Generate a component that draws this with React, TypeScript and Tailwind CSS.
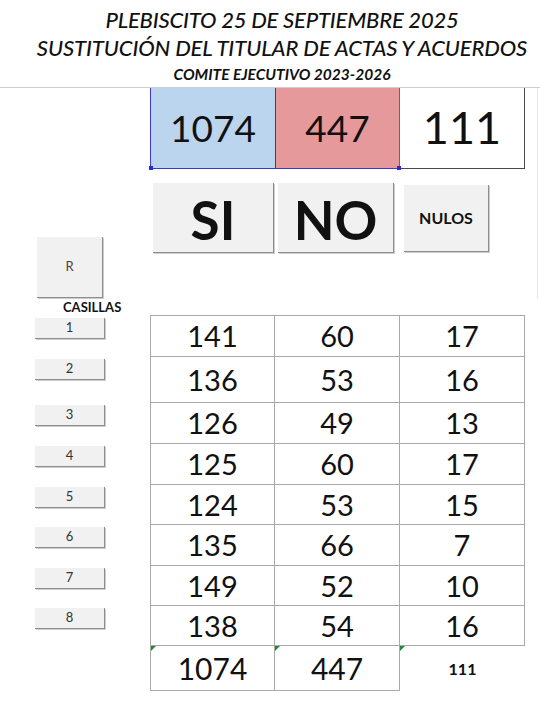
const rows = [
  { n: 1, si: 141, no: 60, nulos: 17, h: 'h-[41px]' },
  { n: 2, si: 136, no: 53, nulos: 16, h: 'h-[46px]' },
  { n: 3, si: 126, no: 49, nulos: 13, h: 'h-[41px]' },
  { n: 4, si: 125, no: 60, nulos: 17, h: 'h-[41px]' },
  { n: 5, si: 124, no: 53, nulos: 15, h: 'h-[40px]' },
  { n: 6, si: 135, no: 66, nulos: 7, h: 'h-[41px]' },
  { n: 7, si: 149, no: 52, nulos: 10, h: 'h-[40px]' },
  { n: 8, si: 138, no: 54, nulos: 16, h: 'h-[40px]' },
];

const btn = 'bg-[#f1f1f1] border-r border-b border-[#8e8e8e] shadow-[1px_1px_0_#cdcdcd]';

function Flag() {
  // excel's little green error corner
  return (
    <span className="absolute left-0 top-0 w-0 h-0 border-t-[5px] border-r-[5px] border-t-[#1e8a3a] border-r-transparent" />
  );
}

export default function App() {
  return (
    <div className="relative w-[540px] h-[711px] bg-white text-[#111] overflow-hidden" style={{ fontFamily: 'Lato, "Open Sans", sans-serif' }}>
      {/* ── Header ── */}
      <div className="h-[88px] border-b border-[#cfcfcf] flex flex-col items-center pl-6 pt-[6px] italic">
        <p className="text-[22px] leading-[28px] font-medium tracking-[-0.2px]">PLEBISCITO 25 DE SEPTIEMBRE 2025</p>
        <p className="text-[22px] leading-[28px] font-medium tracking-[-0.1px]">SUSTITUCIÓN DEL TITULAR DE ACTAS Y ACUERDOS</p>
        <p className="mt-px text-[15.5px] leading-[22px] font-bold">COMITE EJECUTIVO 2023-2026</p>
      </div>

      {/* scroll edge */}
      <div className="absolute left-[537px] top-[88px] w-px h-[210px] bg-[#d6eaee]" />

      <div className="flex">
        {/* ── Left column ── */}
        <div className="w-[150px] shrink-0">
          <div className="h-[81px]" />
          <div className="h-[146px] flex flex-col">
            <div className={`${btn} ml-[37px] mt-[68px] w-[66px] h-[61px] flex items-center justify-center text-[13px] text-[#444]`}>R</div>
            <p className="ml-[63px] mt-px text-[13px] font-bold leading-[16px]">CASILLAS</p>
          </div>
          {rows.map((r) => (
            <div key={r.n} className={`${r.h} pt-[3px]`}>
              <div className={`${btn} ml-[35px] w-[70px] h-[21px] flex items-center justify-center text-[13px] text-[#333]`}>{r.n}</div>
            </div>
          ))}
        </div>

        {/* ── Right column ── */}
        <div className="w-[375px] shrink-0">
          <div className="flex h-[81px]">
            <div className="w-[125px] bg-[#bcd5ee] border-l border-b border-[#3a3ad6] flex items-center justify-center text-[37px] relative">
              1074
              <span className="absolute -left-[2px] -bottom-[2px] w-[4px] h-[4px] bg-[#2b2bd0]" />
            </div>
            <div className="w-[125px] bg-[#e6999a] border-l border-l-[#444] border-b border-b-[#3a3ad6] border-r border-r-[#5a5ad8] flex items-center justify-center text-[37px] relative">
              447
              <span className="absolute -right-[2px] -bottom-[2px] w-[4px] h-[4px] bg-[#2b2bd0]" />
            </div>
            <div className="w-[125px] border-r border-b border-[#4a4a4a] flex items-center justify-center text-[45px]">111</div>
          </div>

          <div className="h-[146px] flex items-start pl-[3px] pt-[14px]">
            <div className={`${btn} w-[121px] h-[70px] flex items-center justify-center text-[53px] font-bold leading-none pt-[4px]`}>SI</div>
            <div className={`${btn} ml-[4px] w-[116px] h-[70px] flex items-center justify-center text-[53px] font-bold leading-none pt-[4px]`}>NO</div>
            <div className={`${btn} ml-[10px] mt-[2px] w-[85px] h-[67px] flex items-center justify-center text-[16px] font-bold`}>NULOS</div>
          </div>

          <div className="border-t border-[#a9a9a9]">
            {rows.map((r) => (
              <div key={r.n} className={`${r.h} flex text-[29px]`}>
                <div className="w-[125px] border-l border-r border-b border-[#a9a9a9] flex items-center justify-center">{r.si}</div>
                <div className="w-[125px] border-r border-b border-[#a9a9a9] flex items-center justify-center">{r.no}</div>
                <div className="w-[125px] border-r border-b border-[#a9a9a9] flex items-center justify-center">{r.nulos}</div>
              </div>
            ))}
            <div className="h-[45px] flex">
              <div className="relative w-[125px] border-l border-r border-b border-[#a9a9a9] flex items-center justify-center text-[30px]"><Flag />1074</div>
              <div className="relative w-[125px] border-r border-b border-[#a9a9a9] flex items-center justify-center text-[30px]"><Flag />447</div>
              <div className="relative w-[125px] flex items-center justify-center text-[16px] font-bold"><Flag />111</div>
            </div>
          </div>
        </div>
      </div>
    </div>
  );
}
